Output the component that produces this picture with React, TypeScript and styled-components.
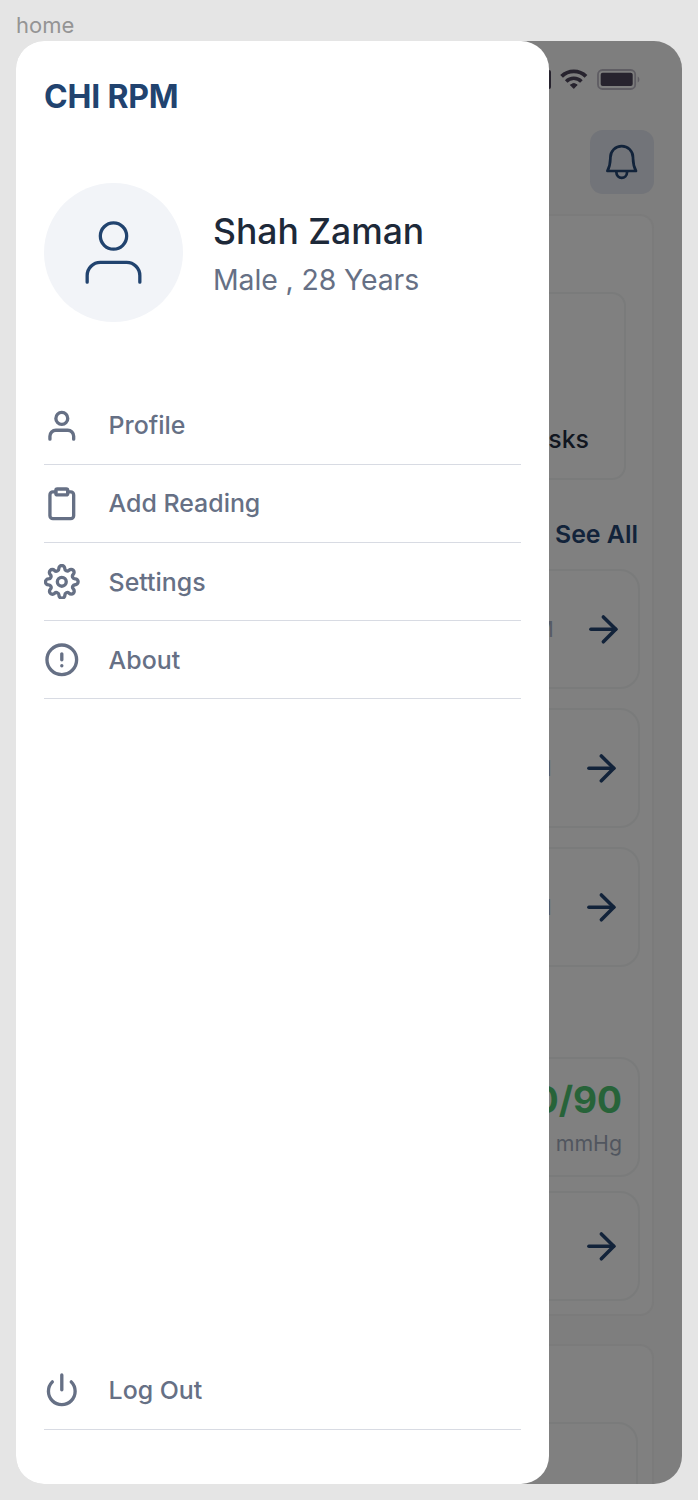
import React from "react";
import styled, { createGlobalStyle } from "styled-components";
import {
  FiAlertCircle,
  FiArrowRight,
  FiClipboard,
  FiPower,
  FiSettings,
  FiUser,
} from "react-icons/fi";

const navyDim = "#12233a";
const lineDim = "#7a7b7b";
const slate = "#667085";

const GlobalStyle = createGlobalStyle`
  * { box-sizing: border-box; }
  body {
    margin: 0;
    background: #e5e5e5;
    font-family: Inter, "Liberation Sans", sans-serif;
  }
`;

const Canvas = styled.main`
  width: 698px;
  height: 1500px;
  padding: 9px 0 0 16px;
  overflow: hidden;
`;

const FrameLabel = styled.div`
  height: 32px;
  line-height: 32px;
  font-size: 22px;
  color: #949494;
`;

const Phone = styled.div`
  display: grid;
  width: 666px;
  height: 1443px;
  border-radius: 28px;
  overflow: hidden;

  > * {
    grid-area: 1 / 1;
    min-height: 0;
  }
`;

/* Home screen, dimmed behind the drawer */

const Home = styled.section`
  display: flex;
  flex-direction: column;
  height: 1443px;
  margin-left: 300px;
  padding-right: 28px;
  overflow: hidden;
  background: #7e7e7e;
`;

const StatusBar = styled.div`
  display: flex;
  justify-content: flex-end;
  align-items: center;
  gap: 9px;
  height: 77px;
  padding-right: 14px;
  flex: none;
`;

const SignalBar = styled.div`
  width: 5px;
  height: 19px;
  border-radius: 2px;
  background: #27232e;
`;

const TopBar = styled.header`
  display: flex;
  justify-content: flex-end;
  height: 64px;
  margin: 12px 0 20px;
  flex: none;
`;

const BellButton = styled.button`
  width: 64px;
  height: 64px;
  padding: 0;
  border: 0;
  border-radius: 13px;
  background: #727479;
`;

const Panel = styled.section<{ $height: number }>`
  flex: none;
  height: ${(p) => p.$height}px;
  margin-bottom: 28px;
  padding: 0 12px;
  border: 2px solid #7b7b7b;
  border-left: 0;
  border-radius: 0 14px 14px 0;
  background: #808080;
`;

const TaskTile = styled.div`
  display: flex;
  justify-content: flex-end;
  align-items: flex-end;
  height: 188px;
  margin: 76px 14px 0 0;
  padding: 0 35px 21px 0;
  border: 2px solid ${lineDim};
  border-radius: 14px;
  font-size: 24.9px;
  font-weight: 500;
  line-height: 36px;
  color: #11161f;
`;

const SeeAll = styled.div`
  height: 89px;
  padding-right: 2px;
  text-align: right;
  font-size: 24.9px;
  font-weight: 600;
  line-height: 108px;
  color: ${navyDim};
`;

const Item = styled.div<{ $height: number; $top?: number; $inset?: number }>`
  display: flex;
  justify-content: flex-end;
  align-items: center;
  gap: 28.6px;
  height: ${(p) => p.$height}px;
  margin-top: ${(p) => p.$top ?? 0}px;
  padding-right: ${(p) => p.$inset ?? 15}px;
  border: 2px solid ${lineDim};
  border-radius: 20px;
  color: ${navyDim};
`;

const Time = styled.span`
  font-size: 21.3px;
  color: #555a64;
`;

const Result = styled.div`
  display: flex;
  flex-direction: column;
  align-items: flex-end;
`;

const ResultValue = styled.strong`
  font-size: 37px;
  font-weight: 700;
  line-height: 46px;
  color: #276339;
`;

const ResultUnit = styled.span`
  margin-top: 6px;
  font-size: 21.3px;
  line-height: 28px;
  color: #51565f;
`;

const EmptyItem = styled.div`
  height: 150px;
  margin: 76px 2px 0 0;
  border: 2px solid ${lineDim};
  border-radius: 20px;
`;

/* Drawer */

const Drawer = styled.aside`
  z-index: 1;
  display: flex;
  flex-direction: column;
  width: 533px;
  height: 1443px;
  padding: 34px 28px 54px;
  border-radius: 28px;
  background: #fff;
`;

const Brand = styled.h1`
  margin: 0;
  height: 40px;
  font-size: 32px;
  font-weight: 700;
  letter-spacing: -0.18px;
  line-height: 43px;
  color: #21436f;
`;

const User = styled.div`
  display: flex;
  align-items: center;
  gap: 30px;
  margin: 68px 0 65px;
`;

const Avatar = styled.div`
  display: grid;
  place-items: center;
  width: 139px;
  height: 139px;
  border-radius: 50%;
  background: #f2f4f8;
  color: #21436f;
`;

const UserName = styled.div`
  padding-top: 2px;
  font-size: 35.5px;
  font-weight: 500;
  line-height: 50px;
  color: #1d2939;
`;

const UserMeta = styled.div`
  font-size: 28.4px;
  letter-spacing: -0.1px;
  line-height: 42px;
  margin-top: 2px;
  color: ${slate};
`;

const Menu = styled.nav`
  display: flex;
  flex-direction: column;
  flex: 1;
`;

const MenuItem = styled.a<{ $last?: boolean }>`
  display: flex;
  align-items: center;
  gap: 29px;
  height: 78.1px;
  padding-bottom: ${(p) => (p.$last ? 1 : 0.4)}px;
  margin-top: ${(p) => (p.$last ? "auto" : "0")};
  border-bottom: 1px solid #d8dbe3;
  font-size: 24.9px;
  font-weight: 500;
  color: ${slate};
`;

const Arrow = () => <FiArrowRight size={42.7} strokeWidth={2} />;

const Wifi = () => (
  <svg width="28" height="21" viewBox="0 0 28 21" fill="none" stroke="#27232e">
    <path d="M1.6 7.4a17.4 17.4 0 0 1 24.4 0" strokeWidth="3.9" />
    <path d="M6.2 12.4a10.7 10.7 0 0 1 15.2 0" strokeWidth="3.6" />
    <path d="M10.4 15.9a5.4 5.4 0 0 1 6.8 0l-3.4 3.5z" fill="#27232e" strokeLinejoin="round" />
  </svg>
);

const Battery = () => (
  <svg width="43" height="21" viewBox="0 0 43 21">
    <rect x="1" y="1" width="37.2" height="19" rx="4.5" fill="none" stroke="#5f5d63" strokeWidth="1.8" />
    <rect x="3.7" y="3.8" width="32" height="13.3" rx="2" fill="#27232e" />
    <path d="M40.7 7.5v6c2.2-1 2.2-5 0-6z" fill="#5f5d63" />
  </svg>
);

const Bell = () => (
  <svg
    width="64"
    height="64"
    viewBox="0 0 64 64"
    fill="none"
    stroke={navyDim}
    strokeWidth="2.7"
    strokeLinejoin="round"
  >
    <path d="M17.4 41C19.3 37.5 20.3 33 20.4 28.2V27.4a11.3 11.3 0 0 1 22.6 0v.8c.1 4.8 1.1 9.3 3 12.8z" />
    <path d="M26.4 41v1.6a5.3 5.3 0 0 0 10.6 0V41" />
  </svg>
);

const menu = [
  { label: "Profile", Icon: FiUser },
  { label: "Add Reading", Icon: FiClipboard },
  { label: "Settings", Icon: FiSettings },
  { label: "About", Icon: FiAlertCircle },
];

export default function App() {
  return (
    <Canvas>
      <GlobalStyle />
      <FrameLabel>home</FrameLabel>
      <Phone>
        <Home>
          <StatusBar>
            <SignalBar />
            <Wifi />
            <Battery />
          </StatusBar>
          <TopBar>
            <BellButton aria-label="Notifications">
              <Bell />
            </BellButton>
          </TopBar>
          <Panel $height={1102}>
            <TaskTile>Tasks</TaskTile>
            <SeeAll>See All</SeeAll>
            <Item $height={120} $inset={13}>
              <Time>PM</Time>
              <Arrow />
            </Item>
            <Item $height={120} $top={19}>
              <Time>PM</Time>
              <Arrow />
            </Item>
            <Item $height={120} $top={19}>
              <Time>PM</Time>
              <Arrow />
            </Item>
            <Item $height={120} $top={90} $inset={16}>
              <Result>
                <ResultValue>120/90</ResultValue>
                <ResultUnit>mmHg</ResultUnit>
              </Result>
            </Item>
            <Item $height={110} $top={14}>
              <Arrow />
            </Item>
          </Panel>
          <Panel $height={240}>
            <EmptyItem />
          </Panel>
        </Home>
        <Drawer>
          <Brand>CHI RPM</Brand>
          <User>
            <Avatar>
              <FiUser size={79} strokeWidth={1} />
            </Avatar>
            <div>
              <UserName>Shah Zaman</UserName>
              <UserMeta>Male , 28 Years</UserMeta>
            </div>
          </User>
          <Menu>
            {menu.map(({ label, Icon }) => (
              <MenuItem key={label}>
                <Icon size={35.6} strokeWidth={2.25} />
                {label}
              </MenuItem>
            ))}
            <MenuItem $last>
              <FiPower size={35.6} strokeWidth={2.25} />
              Log Out
            </MenuItem>
          </Menu>
        </Drawer>
      </Phone>
    </Canvas>
  );
}
